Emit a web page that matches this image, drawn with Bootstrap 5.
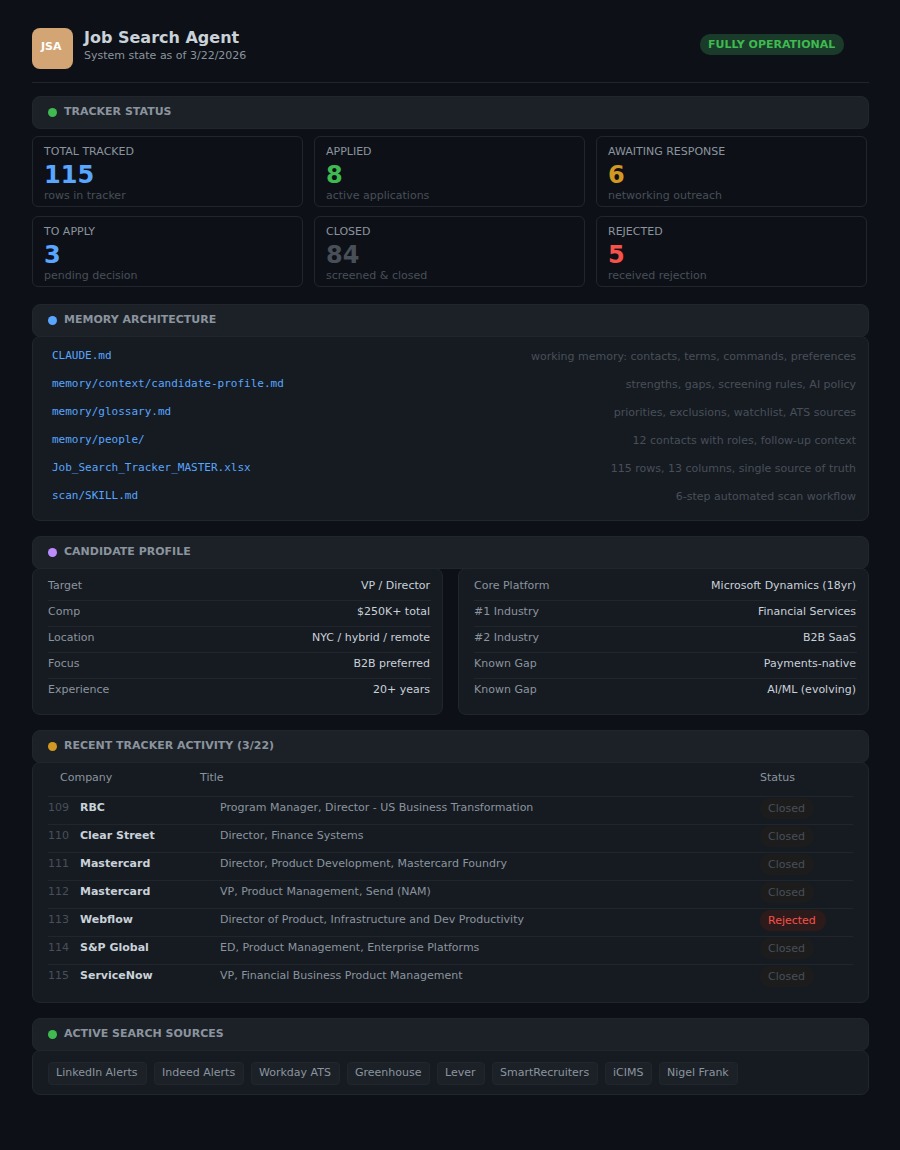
<!DOCTYPE html>
<html lang="en" data-bs-theme="dark">
<head>
<meta charset="utf-8">
<meta name="viewport" content="width=device-width, initial-scale=1">
<title>Job Search Agent</title>
<link href="https://cdn.jsdelivr.net/npm/bootstrap@5.3.0/dist/css/bootstrap.min.css" rel="stylesheet">
<style>
  body { background: #0d1117; color: #8b949e; font: 11px/13px "DejaVu Sans", sans-serif; }
  .page { width: 837px; margin-left: 32px; padding-top: 28px; }
  .masthead { height: 55px; border-bottom: 1px solid #21262d; margin-bottom: 13px; gap: 11px; }
  .avatar { width: 41px; height: 41px; border-radius: 8px; background: #d4a574; color: #fff; padding: 12px 0 0 9px; }
  .title { font-size: 16px; line-height: 19px; color: #c9d1d9; margin: 0 0 2px; }
  .pill { display: inline-block; height: 21px; border-radius: 10px; padding: 4px 8px; white-space: nowrap; }
  .pill-ok { width: 144px; margin: 6px 25px 0 auto; background: #1a3a2a; color: #3fb950; }
  .pill-closed { width: 54px; background: #1c1c1c; color: #484f58; }
  .pill-rejected { width: 66px; background: #2d1b1b; color: #f85149; }
  .sec-head { height: 33px; border: 1px solid #21262d; border-radius: 8px; background: #1c2128; color: #8b949e; padding: 8px 15px; margin: 0; font-size: 11px; line-height: 13px; gap: 7px; }
  .dot { width: 9px; height: 9px; border-radius: 50%; margin-top: 3px; }
  .panel { border: 1px solid #21262d; border-radius: 8px; background: #161b22; margin-top: -1px; margin-bottom: 15px; }
  .stats { display: grid; grid-template-columns: repeat(3, 271px); gap: 9px 11px; margin: 7px 0 17px; }
  .stat { height: 71px; border: 1px solid #21262d; border-radius: 6px; padding: 8px 11px; }
  .num { font-size: 24px; line-height: 28px; margin: 3px 0 0; }
  .c-blue { color: #58a6ff; } .c-green { color: #3fb950; } .c-amber { color: #d29922; }
  .c-red { color: #f85149; } .c-dim { color: #484f58; } .c-text { color: #c9d1d9; }
  .b-blue { background: #58a6ff; } .b-green { background: #3fb950; } .b-amber { background: #d29922; } .b-purple { background: #bc8cff; }
  .files { height: 185px; padding: 12px 12px 0 19px; }
  .file { height: 28px; }
  .file code { font: 11px/13px "DejaVu Sans Mono", monospace; color: #58a6ff; }
  .file .c-dim { padding-top: 1px; }
  .facts { width: 411px; height: 147px; padding: 6px 11px 0 15px; }
  .fact { height: 26px; padding: 4px 1px 0 0; border-bottom: 1px solid #21262d; }
  .fact:last-child { border: 0; }
  .log { height: 241px; padding: 8px 15px 0; }
  .log-head { height: 25px; }
  .log-row { height: 28px; border-top: 1px solid #21262d; padding-top: 4px; }
  .log-grid { display: grid; }
  .log-head.log-grid { grid-template-columns: 140px 560px 1fr; padding-left: 12px; }
  .log-row.log-grid { grid-template-columns: 32px 140px 540px 1fr; }
  .log-row .pill { margin-top: -3px; }
  .sources { display: grid; grid-template-columns: 99px 90px 89px 83px 48px 106px 47px 79px; height: 45px; padding: 11px 15px; gap: 7px; }
  .source { height: 23px; border: 1px solid #21262d; border-radius: 4px; background: #1c2128; padding: 3px 7px; white-space: nowrap; }
</style>
</head>
<body>
<main class="page">
  <header class="masthead d-flex">
    <div class="avatar fw-bold">JSA</div>
    <div>
      <h1 class="title fw-bold">Job Search Agent</h1>
      <div>System state as of 3/22/2026</div>
    </div>
    <span class="pill pill-ok fw-bold">FULLY OPERATIONAL</span>
  </header>

  <h2 class="sec-head d-flex fw-bold"><span class="dot b-green"></span>TRACKER STATUS</h2>
  <section class="stats">
    <div class="stat"><div>TOTAL TRACKED</div><div class="num fw-bold c-blue">115</div><div class="c-dim">rows in tracker</div></div>
    <div class="stat"><div>APPLIED</div><div class="num fw-bold c-green">8</div><div class="c-dim">active applications</div></div>
    <div class="stat"><div>AWAITING RESPONSE</div><div class="num fw-bold c-amber">6</div><div class="c-dim">networking outreach</div></div>
    <div class="stat"><div>TO APPLY</div><div class="num fw-bold c-blue">3</div><div class="c-dim">pending decision</div></div>
    <div class="stat"><div>CLOSED</div><div class="num fw-bold c-dim">84</div><div class="c-dim">screened &amp; closed</div></div>
    <div class="stat"><div>REJECTED</div><div class="num fw-bold c-red">5</div><div class="c-dim">received rejection</div></div>
  </section>

  <h2 class="sec-head d-flex fw-bold"><span class="dot b-blue"></span>MEMORY ARCHITECTURE</h2>
  <section class="panel files">
    <div class="file d-flex justify-content-between"><code>CLAUDE.md</code><span class="c-dim">working memory: contacts, terms, commands, preferences</span></div>
    <div class="file d-flex justify-content-between"><code>memory/context/candidate-profile.md</code><span class="c-dim">strengths, gaps, screening rules, AI policy</span></div>
    <div class="file d-flex justify-content-between"><code>memory/glossary.md</code><span class="c-dim">priorities, exclusions, watchlist, ATS sources</span></div>
    <div class="file d-flex justify-content-between"><code>memory/people/</code><span class="c-dim">12 contacts with roles, follow-up context</span></div>
    <div class="file d-flex justify-content-between"><code>Job_Search_Tracker_MASTER.xlsx</code><span class="c-dim">115 rows, 13 columns, single source of truth</span></div>
    <div class="file d-flex justify-content-between"><code>scan/SKILL.md</code><span class="c-dim">6-step automated scan workflow</span></div>
  </section>

  <h2 class="sec-head d-flex fw-bold"><span class="dot b-purple"></span>CANDIDATE PROFILE</h2>
  <section class="d-flex justify-content-between">
    <div class="panel facts">
      <div class="fact d-flex justify-content-between"><span>Target</span><span class="c-text">VP / Director</span></div>
      <div class="fact d-flex justify-content-between"><span>Comp</span><span class="c-text">$250K+ total</span></div>
      <div class="fact d-flex justify-content-between"><span>Location</span><span class="c-text">NYC / hybrid / remote</span></div>
      <div class="fact d-flex justify-content-between"><span>Focus</span><span class="c-text">B2B preferred</span></div>
      <div class="fact d-flex justify-content-between"><span>Experience</span><span class="c-text">20+ years</span></div>
    </div>
    <div class="panel facts">
      <div class="fact d-flex justify-content-between"><span>Core Platform</span><span class="c-text">Microsoft Dynamics (18yr)</span></div>
      <div class="fact d-flex justify-content-between"><span>#1 Industry</span><span class="c-text">Financial Services</span></div>
      <div class="fact d-flex justify-content-between"><span>#2 Industry</span><span class="c-text">B2B SaaS</span></div>
      <div class="fact d-flex justify-content-between"><span>Known Gap</span><span class="c-text">Payments-native</span></div>
      <div class="fact d-flex justify-content-between"><span>Known Gap</span><span class="c-text">AI/ML (evolving)</span></div>
    </div>
  </section>

  <h2 class="sec-head d-flex fw-bold"><span class="dot b-amber"></span>RECENT TRACKER ACTIVITY (3/22)</h2>
  <section class="panel log">
    <div class="log-head log-grid"><span>Company</span><span>Title</span><span>Status</span></div>
    <div class="log-row log-grid"><span class="c-dim">109</span><span class="fw-bold c-text">RBC</span><span>Program Manager, Director - US Business Transformation</span><span class="pill pill-closed">Closed</span></div>
    <div class="log-row log-grid"><span class="c-dim">110</span><span class="fw-bold c-text">Clear Street</span><span>Director, Finance Systems</span><span class="pill pill-closed">Closed</span></div>
    <div class="log-row log-grid"><span class="c-dim">111</span><span class="fw-bold c-text">Mastercard</span><span>Director, Product Development, Mastercard Foundry</span><span class="pill pill-closed">Closed</span></div>
    <div class="log-row log-grid"><span class="c-dim">112</span><span class="fw-bold c-text">Mastercard</span><span>VP, Product Management, Send (NAM)</span><span class="pill pill-closed">Closed</span></div>
    <div class="log-row log-grid"><span class="c-dim">113</span><span class="fw-bold c-text">Webflow</span><span>Director of Product, Infrastructure and Dev Productivity</span><span class="pill pill-rejected">Rejected</span></div>
    <div class="log-row log-grid"><span class="c-dim">114</span><span class="fw-bold c-text">S&amp;P Global</span><span>ED, Product Management, Enterprise Platforms</span><span class="pill pill-closed">Closed</span></div>
    <div class="log-row log-grid"><span class="c-dim">115</span><span class="fw-bold c-text">ServiceNow</span><span>VP, Financial Business Product Management</span><span class="pill pill-closed">Closed</span></div>
  </section>

  <h2 class="sec-head d-flex fw-bold"><span class="dot b-green"></span>ACTIVE SEARCH SOURCES</h2>
  <section class="panel sources">
    <span class="source">LinkedIn Alerts</span><span class="source">Indeed Alerts</span><span class="source">Workday ATS</span><span class="source">Greenhouse</span><span class="source">Lever</span><span class="source">SmartRecruiters</span><span class="source">iCIMS</span><span class="source">Nigel Frank</span>
  </section>
</main>
<script src="https://cdn.jsdelivr.net/npm/bootstrap@5.3.0/dist/js/bootstrap.bundle.min.js"></script>
</body>
</html>
